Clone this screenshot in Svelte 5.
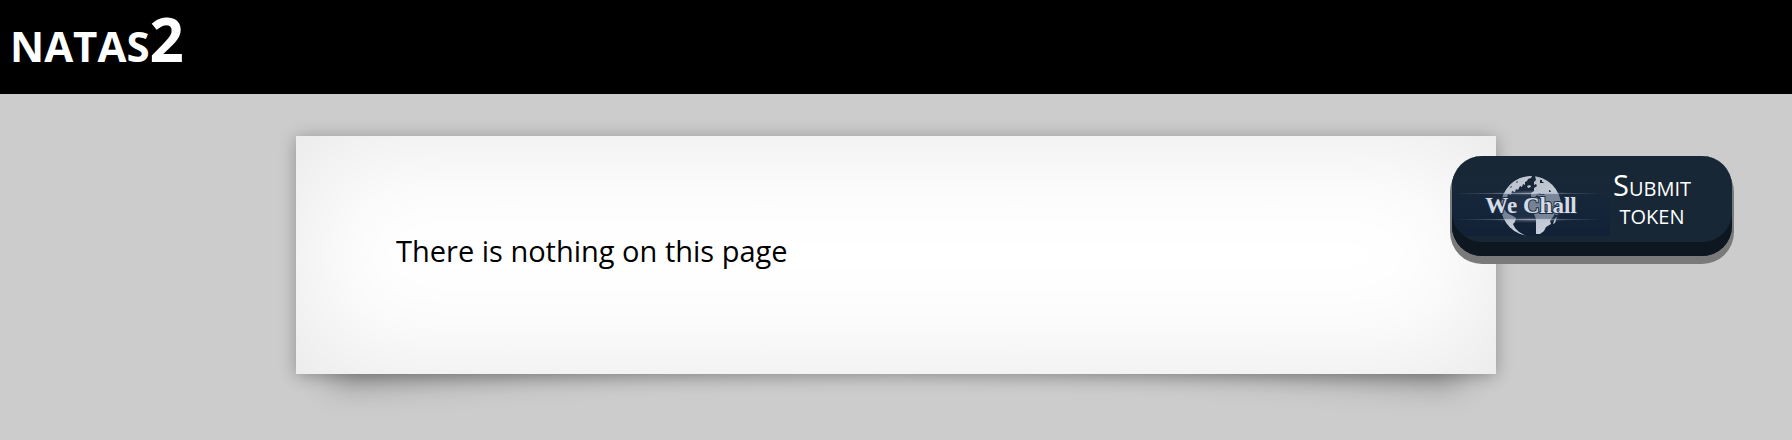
<script>
    const level = 2;
    const message = 'There is nothing on this page';
</script>

<svelte:head>
    <title>natas{level}</title>
</svelte:head>

<header>
    <h1>natas{level}</h1>
</header>

<main>
    <section class="content">
        <p>{message}</p>
    </section>

    <button type="button" class="wechall">
        <svg class="logo" viewBox="0 0 158 60" role="img" aria-label="We Chall">
            <defs>
                <linearGradient id="panel" x1="0" y1="0" x2="0" y2="1">
                    <stop offset="0" stop-color="#192837" />
                    <stop offset="0.45" stop-color="#16263a" />
                    <stop offset="1" stop-color="#122136" />
                </linearGradient>
                <linearGradient id="land" x1="0" y1="0" x2="1" y2="1">
                    <stop offset="0" stop-color="#b4bec9" />
                    <stop offset="1" stop-color="#ccd3de" />
                </linearGradient>
                <linearGradient id="streak">
                    <stop offset="0" stop-color="#8d99b5" stop-opacity="0" />
                    <stop offset="0.5" stop-color="#aab4c9" stop-opacity="0.7" />
                    <stop offset="1" stop-color="#8d99b5" stop-opacity="0" />
                </linearGradient>
                <radialGradient id="glow">
                    <stop offset="0" stop-color="#dde2f0" stop-opacity="0.35" />
                    <stop offset="1" stop-color="#8d99b5" stop-opacity="0" />
                </radialGradient>
                <clipPath id="disc"><circle cx="79" cy="30" r="30" /></clipPath>
            </defs>

            <rect width="158" height="60" fill="url(#panel)" />

            <g clip-path="url(#disc)" fill="url(#land)">
                <!-- North America and Greenland -->
                <path d="M49 27 L50 20 L54 13 L60 6 L68 1 L76 0 L80 0 L79 2 L76 3 L75 5 L73 6 L73 9 L71 8 L70 11 L68 10 L66 14 L64 13 L63 16 L60 15 L59 19 L56 18 L55 22 L53 23 L52 26 L50 29Z" />
                <path d="M75 10 L78 9 L79 11 L76 12Z" />
                <!-- South America -->
                <path d="M48 31 L52 33 L55 37 L61 40 L64 42 L63 46 L61 48 L63 52 L67 56 L74 60 L64 60 L54 52 L47 40Z" />
                <!-- Europe and Asia -->
                <path d="M83 0 L91 1 L99 6 L105 12 L110 20 L110 29 L108 36 L105 39 L102 38 L103 33 L100 30 L97 25 L93 24 L89 22 L85 19 L83 21 L79 21 L79 17 L82 15 L82 12 L85 10 L84 8 L82 9 L82 6 L84 4Z" />
                <!-- Africa -->
                <path d="M78 23 L84 21 L90 24 L97 24 L100 31 L105 33 L101 41 L98 45 L99 48 L94 51 L92 55 L88 58 L84 58 L84 43 L82 38 L77 37 L73 32 L74 27Z" />
                <path d="M103 42 L105 41 L103 47 L101 48Z" />
                <g fill="#162538">
                    <path d="M88 4 L90 4 L90 6 L92 6 L91 7 L88 7Z" />
                    <path d="M84 18 L88 17 L89 18 L92 18 L93 19 L89 19Z" />
                    <path d="M97 14 L98 14 L99 16 L97 16Z" />
                    <path d="M58 11 L60 10 L59 12Z M64 6 L66 5 L65 7Z" />
                </g>
            </g>

            <rect y="18" width="158" height="25" fill="#2a3c56" opacity="0.48" clip-path="url(#disc)" />
            <rect x="4" y="17" width="145" height="1" fill="url(#streak)" />
            <rect x="4" y="43" width="145" height="1" fill="url(#streak)" />
            <ellipse cx="79" cy="17" rx="40" ry="3" fill="url(#glow)" />
            <ellipse cx="79" cy="44" rx="40" ry="3" fill="url(#glow)" />
            <text x="79" y="37" text-anchor="middle">We Chall</text>
        </svg>
        <span>Submit token</span>
    </button>
</main>

<style>
    :global(body) {
        margin: 0;
        background: #ccc;
        font-family: "Open Sans", "Noto Sans", sans-serif;
    }

    header {
        background: #000;
        color: #fff;
    }

    h1 {
        margin: 0;
        padding: 0 10px 16px;
        font-size: 60px;
        font-weight: 700;
        font-variant: small-caps;
        line-height: 78px;
    }

    main {
        position: relative;
        padding: 42px 60px;
    }

    .content {
        position: relative;
        z-index: 0;
        box-sizing: border-box;
        width: 72%;
        max-width: 1200px;
        margin: 0 auto;
    }

    /* the paper itself, above the lifted corner shadows */
    .content p {
        margin: 0;
        padding: 96px 100px 104px;
        background: #fff;
        box-shadow: 0 2px 16px rgba(0, 0, 0, 0.3), 0 0 120px rgba(0, 0, 0, 0.1) inset;
        font-size: 29px;
        line-height: 38px;
    }

    .content::before,
    .content::after {
        content: "";
        position: absolute;
        z-index: -1;
        bottom: 24px;
        left: 46px;
        width: 45%;
        height: 20%;
        box-shadow: 0 16px 32px rgba(0, 0, 0, 0.3);
        transform: skew(-15deg) rotate(-4deg);
    }

    .content::after {
        right: 46px;
        left: auto;
        transform: skew(15deg) rotate(4deg);
    }

    /* floats over the right edge of the paper */
    .wechall {
        position: absolute;
        z-index: 1;
        top: 62px;
        right: 60px;
        display: flex;
        align-items: center;
        width: 280px;
        height: 100px;
        padding: 0 0 14px;
        overflow: hidden;
        border: 0;
        border-radius: 30px;
        background: #182736;
        box-shadow: 0 6px 0 2px #7a7a7a;
        color: #fff;
        font-family: inherit;
        font-size: 29px;
        font-variant: small-caps;
        line-height: 28px;
        cursor: pointer;
    }

    .wechall::before {
        content: "";
        position: absolute;
        inset: 0 0 14px;
        border-radius: 30px;
        box-shadow: 0 0 0 30px #0e1620;
    }

    .logo {
        flex: none;
        width: 158px;
        height: 60px;
        margin-top: 14px;
    }

    .logo text {
        fill: #d5dce6;
        stroke: #202f45;
        stroke-width: 2px;
        paint-order: stroke;
        font-family: "Liberation Serif", serif;
        font-size: 23px;
        font-weight: bold;
        font-variant: normal;
    }

    .wechall span {
        width: 84px;
        text-align: center;
    }
</style>
